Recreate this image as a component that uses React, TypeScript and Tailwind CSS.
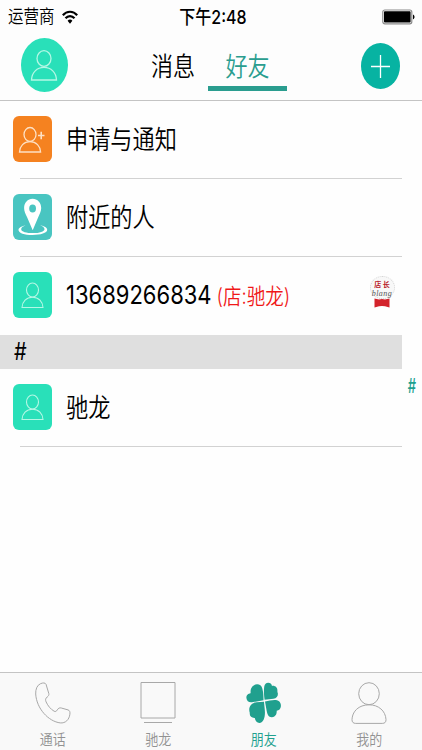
import { ReactNode } from 'react';
import clsx from 'clsx';

const Tall = ({ className, children }: { className?: string; children: ReactNode }) => (
  <span className={clsx('inline-block scale-y-[1.18] whitespace-nowrap leading-none', className)}>{children}</span>
);

const PersonTile = () => (
  <svg viewBox="0 0 39 46" className="h-[46px] w-[39px] rounded-[6px] bg-[#29e0b9]" fill="none" stroke="#b4f7e5" strokeWidth="1.1">
    <ellipse cx="19.5" cy="18" rx="6" ry="7" />
    <path d="M9 35.5c.3-6 4.3-10.3 10.5-10.3S29.7 29.5 30 35.5z" />
  </svg>
);

const RequestTile = () => (
  <svg viewBox="0 0 39 46" className="h-[46px] w-[39px] rounded-[6px] bg-[#f58220]" fill="none" stroke="#fde0c4" strokeWidth="1.3">
    <ellipse cx="17" cy="18.5" rx="6" ry="7" />
    <path d="M6.5 36c.3-6 4.3-10.3 10.5-10.3S27.3 30 27.6 36z" />
    <path d="M25 19.5h6.5M28.2 15.800v7.5" strokeWidth="1.6" />
  </svg>
);

const NearbyTile = () => (
  <svg viewBox="0 0 39 46" className="h-[46px] w-[39px] rounded-[6px] bg-[#49c5c1]">
    <path d="M12.5 31.5C8 32.3 5.5 34 5.5 36c0 3 6 5 14 5s14.700-2 14.700-5.200c0-2.200-3-3.800-7-4.500 2.600.9 4.300 2.200 4.300 3.900 0 2.400-5 3.900-11.500 3.900S8.200 37.700 8.200 35.200c0-1.500 1.600-2.800 4.300-3.700z" fill="#fff" />
    <path fillRule="evenodd" d="M19.600 4.800c-4.900 0-8.500 4-8.500 9.200 0 3 1.300 5.800 3 9.200l5.600 13 5.500-13c1.600-3.400 3-6.200 3-9.200 0-5.200-3.700-9.200-8.600-9.200zm0 5.700a3.400 4 0 1 1 0 8 3.400 4 0 1 1 0-8z" fill="#fff" />
  </svg>
);

const Row = ({ icon, line = true, children }: { icon: ReactNode; line?: boolean; children: ReactNode }) => (
  <div className="relative flex h-[78px] w-[402px] items-center pb-[2px] pl-[13px]">
    {icon}
    <div className="ml-[14px] flex flex-1 items-center text-[22.2px] font-[350]">{children}</div>
    {line && <div className="absolute bottom-0 left-5 right-0 h-px bg-[#d2d2d2]" />}
  </div>
);

const OwnerBadge = () => (
  <div className="mb-[7px] ml-auto mr-[6px] flex h-[32px] w-[28px] flex-col items-center">
    <div className="flex h-[23px] w-[25px] shrink-0 flex-col items-center rounded-[50%] border border-dotted border-[#d6d6d6] bg-[#f8f8f8] pt-[2px]">
      <span className="whitespace-nowrap font-['Noto_Sans_CJK_SC',sans-serif] text-[7px] font-bold leading-[10px] text-[#b8202a]">店 长</span>
      <span className="font-['Liberation_Serif',serif] text-[8px] italic leading-[9px] tracking-[0.5px] text-[#555]">blang</span>
    </div>
    <svg viewBox="0 0 16 10" className="-mt-px h-[10px] w-4 shrink-0">
      <path d="M.5.5 5 1.5 8 1l3 .5L15.500.5v9L11 8.300 8 8l-3 .3-4.500 1.200z" fill="#d3232b" />
    </svg>
  </div>
);

const PhoneIcon = () => (
  <svg viewBox="0 0 36 42" className="h-[42px] w-9" fill="none" stroke="#a8a8a8" strokeWidth="1">
    <path d="M5.500 1.700C8 .6 10.200.7 11 2.200l2.800 9.300c.4 1.500-.4 2.500-1.600 3.500-1.800 1.500-2 2.800-1.100 4.900 1.800 4 4.500 7.200 8 9.300 1.300.7 2.300.2 3.200-1.300 1.100-1.900 2.300-2.300 4-1.900l6.700 1.900c1.800.6 2.200 2.300 1.900 4.300-.7 5.500-4.500 9.200-9.600 8.700C13.500 39.500 1.500 26.500.7 12 .5 7.300 2 3.200 5.500 1.700z" />
  </svg>
);

const StoreIcon = () => (
  <svg viewBox="0 0 36 42" className="h-[42px] w-9" fill="none" stroke="#a8a8a8" strokeWidth="1">
    <path d="M1 .5h34v35.500H1zM4 40.500h28" />
  </svg>
);

const CloverIcon = () => (
  <svg viewBox="0 0 36 42" className="h-[42px] w-9" fill="#20a08e">
    <path d="M17.500 18.300C17.500 14 17.400 10.500 16.300 6.500 15.500 3.500 13.500 2.200 11 2.300 7 2.500 4.300 6 4.600 10.200c.1.900-.2 1.200-1 1.300C1.300 12 .2 13.800.4 16c.3 3 2.300 4.600 5.400 4.300z" />
    <path d="M18.600 17.800C17.900 13 17.700 8 18.200 4.700 18.600 2 20.200.7 22.200.7c2 0 3.400 1.100 3.800 3.200 3.300-.5 5.700 1.900 5.400 5 -.1 1.100.4 1.700.5 2.900.2 2.700-1.500 4.600-4.500 4.900z" />
    <path d="M18 19.700c.3 4.500 1.300 9.300.8 13.300-.4 4.500-2.300 7.800-5.200 7.900-2.700.1-4.300-1.900-4.800-4.900-3.200.2-5.500-1.800-5-5C1.800 25 5.500 20.800 10.500 20.200z" />
    <path d="M19 19.500c4-.4 7.500-1.800 10.800-1.400 3.500.4 5.400 3 5.100 6.200-.2 2.600-2 4.300-4.200 4.400.3 3.800-1.700 6.300-4.700 6.500-3.300.2-4.600-2.500-5.300-6.200z" />
  </svg>
);

const MeIcon = () => (
  <svg viewBox="0 0 36 42" className="h-[42px] w-9" fill="none" stroke="#a8a8a8" strokeWidth="1">
    <ellipse cx="18" cy="11.700" rx="10.300" ry="11" />
    <path d="M11 24c2-.7 4.500-1.200 7-1.200 9.500 0 16.500 6 17 14.700.1 2.600-1.200 3.900-3.700 3.900H4.700C2.200 41.400.9 40 1 37.500 1.400 31 5 26.300 11 24z" />
  </svg>
);

const tabs = [
  { label: '通话', icon: <PhoneIcon /> },
  { label: '驰龙', icon: <StoreIcon /> },
  { label: '朋友', icon: <CloverIcon />, active: true },
  { label: '我的', icon: <MeIcon /> }
];

export const App = () => {
  return (
    <div className="flex h-[750px] w-[422px] flex-col bg-[#fefefe] font-[Inter,'Noto_Sans_CJK_SC',sans-serif] text-black">
      <header className="h-[101px] border-b border-[#c4c4c4] bg-[#fdfdfd]">
        <div className="grid h-8 grid-cols-3 items-center pl-2 pr-[7px] pt-px text-[15.5px]">
          <div className="flex items-center gap-[7px]">
            <Tall className="mt-px font-[350]">运营商</Tall>
            <svg viewBox="0 0 16 14" className="h-[14px] w-4" fill="none" stroke="#000" strokeWidth="2.2">
              <path d="M.8 5.200c4-4.600 10.400-4.600 14.400 0M3.500 8.300c2.600-3 6.400-3 9 0" />
              <path d="M5.600 10.700c1.400-1.500 3.400-1.500 4.800 0L8 13.700z" fill="#000" stroke="none" />
            </svg>
          </div>
          <Tall className="ml-[3px] justify-self-center text-[16px] font-medium">下午2:48</Tall>
          <svg viewBox="0 0 33 16" className="h-4 w-[33px] justify-self-end">
            <rect x=".8" y="1" width="29" height="13.8" rx="2" fill="#fff" stroke="#8a8a8a" strokeWidth="1.2" />
            <rect x="2" y="2.3" width="26.6" height="11.2" rx=".8" />
            <path d="M31 5.500c2 .8 2 4 0 4.800z" />
          </svg>
        </div>
        <div className="flex h-[68px] items-start pl-[21px]">
          <svg viewBox="0 0 47 54" className="mt-[6px] h-[54px] w-[47px] rounded-[50%] bg-[#29e0b9]" fill="none" stroke="#b4f7e5" strokeWidth="1.3">
            <ellipse cx="23" cy="20.5" rx="7" ry="7.8" />
            <path d="M10.500 42c.3-7.500 5.500-12.600 12.500-12.600S35.200 34.500 35.500 42z" />
          </svg>
          <div className="ml-[68px] flex h-[59px] w-[72px] items-center pt-[11px] text-[22px] font-[350]">
            <Tall className="ml-[15px]">消息</Tall>
          </div>
          <div className="flex h-[59px] w-[79px] items-center justify-center border-b-[5px] border-[#2a9d8f] pt-[16px] text-[22px] font-[350] text-[#2a9d8f]">
            <Tall>好友</Tall>
          </div>
          <svg viewBox="0 0 39 46" className="ml-[74px] mt-[11px] h-[46px] w-[39px] rounded-[50%] bg-[#07b3a2]" stroke="#fff" strokeWidth="1.3">
            <path d="M10 23.500h19M19.500 12v23" />
          </svg>
        </div>
      </header>

      <main className="relative flex-1">
        <Row icon={<RequestTile />}>
          <Tall className="mt-[3px]">申请与通知</Tall>
        </Row>
        <Row icon={<NearbyTile />}>
          <Tall className="mt-[3px]">附近的人</Tall>
        </Row>
        <Row icon={<PersonTile />} line={false}>
          <Tall className="text-[22px] font-normal">13689266834</Tall>
          <Tall className="ml-[5px] mt-[3px] text-[18.5px] text-[#f01818]">(店:驰龙)</Tall>
          <OwnerBadge />
        </Row>
        <div className="flex h-[34px] w-[402px] items-center bg-[#dfdfdf] pl-[14px] text-[20px]">
          <Tall className="scale-y-[1.3]">#</Tall>
        </div>
        <Row icon={<PersonTile />}>
          <Tall className="mt-[3px]">驰龙</Tall>
        </Row>
        <div className="absolute right-[6px] top-[276px] text-[13px] font-medium text-[#20a08e]">
          <span className="inline-block scale-y-150 leading-none">#</span>
        </div>
      </main>

      <nav className="grid h-[78px] grid-cols-4 border-t border-[#c4c4c4] bg-[#f9f9f9]">
        {tabs.map((tab) => (
          <div key={tab.label} className={clsx('flex flex-col items-center pt-[9px]', tab.active ? 'text-[#20a08e]' : 'text-[#929292]')}>
            {tab.icon}
            <Tall className="mt-[9px] text-[13px] font-[350]">{tab.label}</Tall>
          </div>
        ))}
      </nav>
    </div>
  );
};

export default App;
